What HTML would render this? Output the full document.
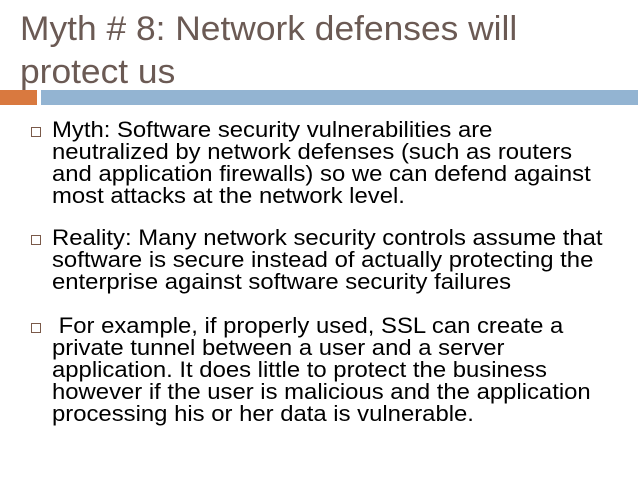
<!DOCTYPE html>
<html><head><style>
body{margin:0;width:638px;height:479px;background:#fff;overflow:hidden;position:relative;font-family:"Liberation Sans",sans-serif}
.t{position:absolute;left:20px;top:8px;font-size:34.5px;line-height:43px;color:#6b5a54;transform:scaleX(1.025);transform-origin:0 0;white-space:nowrap}
.o{position:absolute;left:0;top:90px;width:37px;height:15px;background:#d9793f}
.b{position:absolute;left:41px;top:90px;width:597px;height:15px;background:#93b4d2}
.p{position:absolute;left:52px;font-size:22px;line-height:22px;color:#000;transform:scaleX(1.085);transform-origin:0 0;white-space:nowrap}
.s{position:absolute;left:31px;width:8px;height:8px;border:1px solid #7a5a4a}
</style></head><body>
<div class="t">Myth # 8: Network defenses will<br>protect us</div>
<div class="o"></div><div class="b"></div>
<div class="s" style="top:127px"></div>
<div class="p" style="top:119px">Myth: Software security vulnerabilities are<br>neutralized by network defenses (such as routers<br>and application firewalls) so we can defend against<br>most attacks at the network level.</div>
<div class="s" style="top:235px"></div>
<div class="p" style="top:227px">Reality: Many network security controls assume that<br>software is secure instead of actually protecting the<br>enterprise against software security failures</div>
<div class="s" style="top:323px"></div>
<div class="p" style="top:315px">&nbsp;For example, if properly used, SSL can create a<br>private tunnel between a user and a server<br>application. It does little to protect the business<br>however if the user is malicious and the application<br>processing his or her data is vulnerable.</div>
</body></html>
